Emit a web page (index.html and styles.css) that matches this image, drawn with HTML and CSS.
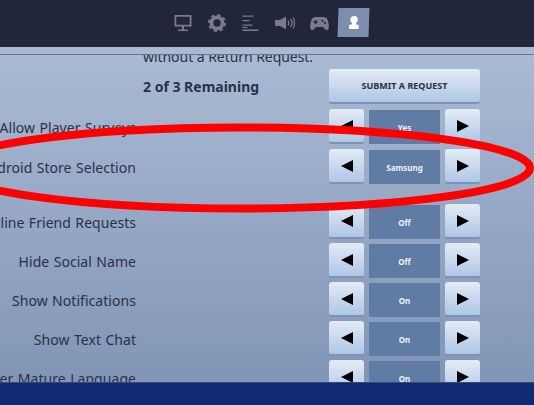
FILE: index.html
```html
<!DOCTYPE html>
<html lang="en">
<head>
    <meta charset="UTF-8">
    <title>Settings</title>
    <link rel="stylesheet" href="styles.css">
</head>
<body>
    <div class="screen">
        <header class="topbar">
            <svg class="tab" width="18" height="18" viewBox="0 0 18 18"><path d="M0.500 1h17v11.500H0.500z M2.300 2.800v7.900h13.400V2.800z M8 12.500h2v3H8z M4 15.500h10V17H4z" fill="#777b8d" fill-rule="evenodd"/></svg>
            <svg class="tab" width="18" height="18" viewBox="0 0 18 18"><circle cx="9" cy="9" r="5.600" fill="none" stroke="#777b8d" stroke-width="3.800"/><circle cx="9" cy="9" r="8" fill="none" stroke="#777b8d" stroke-width="2" stroke-dasharray="3.300 2.980"/></svg>
            <svg class="tab" width="17" height="18" viewBox="0 0 17 18"><path d="M0.500 1.500h11v1.300H0.500z M0.500 6h7v1.300H0.500z M0.500 10.500h10v1.300H0.500z M0.500 13h5v1H0.500z M0.500 15.500h16v1.500H0.500z" fill="#777b8d"/></svg>
            <svg class="tab" width="20" height="18" viewBox="0 0 20 18"><path d="M0 6h5l6-3.500v13L5 12H0z" fill="#777b8d"/><path d="M13 6.500q1.500 2.500 0 5 M15.500 5q1.600 1.800 1.600 4t-1.600 4 M18 3.500q1.600 2.500 1.600 5.500T18 14.500" fill="none" stroke="#777b8d" stroke-width="1.300"/></svg>
            <svg class="tab tab-pad" width="19" height="18" viewBox="0 0 19 18"><path d="M5 3h9q3.500 0 4.500 6t-1 7q-2 .8-4.500-3H6q-2.500 3.800-4.500 3T.5 9Q1.500 3 5 3z" fill="#777b8d"/><path d="M3.500 7.300h4v1.500h-4z M4.750 6h1.500v4h-1.500z" fill="#22263c"/><circle cx="12.500" cy="6.800" r="1.100" fill="#22263c"/><circle cx="15" cy="9" r="1.100" fill="#22263c"/></svg>
            <div class="tab-active">
                <svg width="12" height="14" viewBox="0 0 12 14"><path d="M6 0c2.400 0 3.800 1.600 3.800 3.600 0 1.500-.7 2.700-1.800 3.400v1.200l2.800.8V13H1.200V9l2.800-.8V7C2.900 6.300 2.200 5.100 2.200 3.600 2.200 1.600 3.600 0 6 0z" fill="#fff"/></svg>
            </div>
        </header>
        <div class="subbar"></div>

        <main class="content">
            <div class="notice-col">
                <p class="notice">without a Return Request.</p>
                <p class="remaining">2 of 3 Remaining</p>
            </div>
            <button class="submit">SUBMIT A REQUEST</button>

            <div class="row row-first">
                <span class="row-label">Allow Player Surveys</span>
                <div class="stepper"><span class="arrow"><i class="tri tri-left"></i></span><span class="value">Yes</span><span class="arrow"><i class="tri tri-right"></i></span></div>
            </div>
            <div class="row row-store">
                <span class="row-label">Android Store Selection</span>
                <div class="stepper"><span class="arrow"><i class="tri tri-left"></i></span><span class="value">Samsung</span><span class="arrow"><i class="tri tri-right"></i></span></div>
            </div>
            <div class="row row-gap">
                <span class="row-label">Decline Friend Requests</span>
                <div class="stepper"><span class="arrow"><i class="tri tri-left"></i></span><span class="value">Off</span><span class="arrow"><i class="tri tri-right"></i></span></div>
            </div>
            <div class="row">
                <span class="row-label">Hide Social Name</span>
                <div class="stepper"><span class="arrow"><i class="tri tri-left"></i></span><span class="value">Off</span><span class="arrow"><i class="tri tri-right"></i></span></div>
            </div>
            <div class="row">
                <span class="row-label">Show Notifications</span>
                <div class="stepper"><span class="arrow"><i class="tri tri-left"></i></span><span class="value">On</span><span class="arrow"><i class="tri tri-right"></i></span></div>
            </div>
            <div class="row">
                <span class="row-label">Show Text Chat</span>
                <div class="stepper"><span class="arrow"><i class="tri tri-left"></i></span><span class="value">On</span><span class="arrow"><i class="tri tri-right"></i></span></div>
            </div>
            <div class="row">
                <span class="row-label">Filter Mature Language</span>
                <div class="stepper"><span class="arrow"><i class="tri tri-left"></i></span><span class="value">On</span><span class="arrow"><i class="tri tri-right"></i></span></div>
            </div>
        </main>

        <footer class="bottombar"></footer>

        <!-- red marker drawn over the screenshot -->
        <svg class="marker" width="534" height="405" viewBox="0 0 534 405">
            <ellipse cx="240" cy="168" rx="290" ry="40.500" fill="none" stroke="#ff0000" stroke-width="8"/>
        </svg>
    </div>
</body>
</html>
```

FILE: styles.css
```css
/* Basic styling */
html, body { margin: 0; padding: 0; }
body { font-family: "Noto Sans", sans-serif; background: #8296b6; }
.screen { position: relative; width: 534px; height: 405px; overflow: hidden; display: flex; flex-direction: column; }

.topbar { height: 47px; flex: none; background: #22263c; box-sizing: border-box; display: flex; align-items: center; gap: 16px; padding-left: 174px; padding-bottom: 2px; }
.tab { flex: none; }
.tab-pad { margin-left: -1px; }
.tab-active { width: 31px; height: 29px; background: #7d8dac; display: flex; align-items: center; justify-content: center; transform: skewX(-2deg); margin-left: -7px; }

.subbar { height: 8px; flex: none; box-sizing: border-box; background: #a9bad3; border-bottom: 1px solid #68728a; }

.content { flex: 1; min-height: 0; overflow: hidden; background: linear-gradient(#a9bad3, #8195b6); display: grid; grid-template-columns: 136px 151px; column-gap: 193px; align-content: start; }

.notice-col { grid-column: 1; margin-left: 143px; width: 172px; color: #2a3148; }
.notice { margin: -8px 0 0; font-size: 14px; line-height: 20px; white-space: nowrap; letter-spacing: -0.05px; }
.remaining { margin: 10px 0 0; font-size: 14px; font-weight: 700; line-height: 20px; white-space: nowrap; }

.submit { grid-column: 2; margin-top: 14px; height: 35px; padding: 0; border: 0; border-radius: 3px; border-bottom: 2px solid #7d92b6; background: linear-gradient(#e4ebf5, #aec6e6); color: #2a3148; font-family: inherit; font-size: 9px; font-weight: 700; }

.row { grid-column: 1 / 3; display: grid; grid-template-columns: 136px 151px; column-gap: 193px; align-items: center; height: 35px; margin-top: 4px; }
.row-first { margin-top: 5px; }
.row-store { margin-top: 5px; }
.row-gap { margin-top: 20px; }

.row-label { justify-self: end; white-space: nowrap; font-size: 14px; letter-spacing: 0.05px; word-spacing: 0.7px; line-height: 20px; padding-top: 2px; color: #2a3148; }

.stepper { display: flex; justify-content: space-between; height: 35px; }
.arrow { width: 35px; box-sizing: border-box; border-radius: 3px; border-bottom: 2px solid #7d92b6; background: linear-gradient(#e4ebf5, #aec6e6); display: flex; align-items: center; justify-content: center; }
.value { width: 71px; height: 34px; margin-top: 1px; background: #607ca4; color: #eef2f7; font-size: 8px; font-weight: 700; display: flex; align-items: center; justify-content: center; }

.tri { display: block; width: 0; height: 0; border-top: 6.500px solid transparent; border-bottom: 6.500px solid transparent; }
.tri-left { border-right: 12px solid #000; }
.tri-right { border-left: 12px solid #000; }

.bottombar { height: 23px; flex: none; background: #0f2a72; border-top: 1px solid #3a4a70; box-sizing: border-box; }

.marker { position: absolute; left: 0; top: 0; pointer-events: none; }
```
